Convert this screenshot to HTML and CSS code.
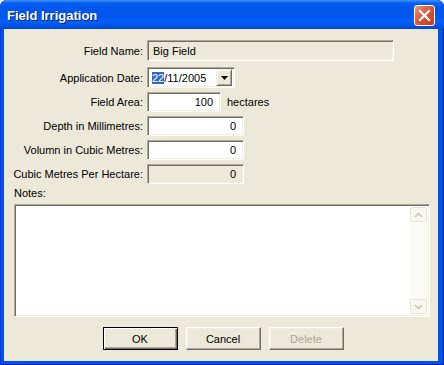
FILE: index.html
```html
<!DOCTYPE html>
<html lang="en">
<head>
  <meta charset="UTF-8">
  <title>Field Irrigation</title>
  <link rel="stylesheet" href="styles.css">
</head>
<body>
  <div class="window">
    <div class="titlebar">
      <span class="title">Field Irrigation</span>
      <span class="close">
        <svg width="13" height="13" viewBox="0 0 13 13"><path d="M2 2 L11 11 M11 2 L2 11" stroke="#fff" stroke-width="2.2" stroke-linecap="square"/></svg>
      </span>
    </div>

    <div class="client">
      <div class="form">
        <div class="row tall">
          <label>Field Name:</label>
          <div class="field readonly wide">Big Field</div>
        </div>
        <div class="row tall">
          <label>Application Date:</label>
          <div class="field combo">
            <span class="date"><span class="sel">22</span>/11/2005</span>
            <span class="drop">
              <svg width="7" height="4" viewBox="0 0 7 4"><path d="M0 0 H7 L3.5 4 Z" fill="#000"/></svg>
            </span>
          </div>
        </div>
        <div class="row">
          <label>Field Area:</label>
          <div class="field num short">100</div>
          <span class="unit">hectares</span>
        </div>
        <div class="row">
          <label>Depth in Millimetres:</label>
          <div class="field num">0</div>
        </div>
        <div class="row">
          <label>Volumn in Cubic Metres:</label>
          <div class="field num">0</div>
        </div>
        <div class="row">
          <label>Cubic Metres Per Hectare:</label>
          <div class="field num readonly">0</div>
        </div>
      </div>

      <div class="notes-label">Notes:</div>
      <div class="field notes">
        <div class="notes-text"></div>
        <div class="scrollbar">
          <span class="arrow">
            <svg width="9" height="6" viewBox="0 0 9 6"><path d="M1 5 L4.5 1.5 L8 5" fill="none" stroke="#c9c7ba" stroke-width="1.6"/></svg>
          </span>
          <span class="track"></span>
          <span class="arrow">
            <svg width="9" height="6" viewBox="0 0 9 6"><path d="M1 1 L4.5 4.5 L8 1" fill="none" stroke="#c9c7ba" stroke-width="1.6"/></svg>
          </span>
        </div>
      </div>

      <div class="buttons">
        <button class="btn default">OK</button>
        <button class="btn">Cancel</button>
        <button class="btn" disabled>Delete</button>
      </div>
    </div>
  </div>
</body>
</html>
```

FILE: styles.css
```css
body {
  margin: 0;
  font-family: "Liberation Sans", Arial, sans-serif;
  font-size: 11px;
  color: #000;
  background: #fff;
}
.window {
  width: 444px;
  height: 365px;
  display: flex;
  flex-direction: column;
  background: #0053e6;
  border-radius: 7px 7px 0 0;
  box-shadow: inset 1px 0 0 #0831d9, inset -1px 0 0 #001ea0, inset 0 -1px 0 #001ea0;
}
.titlebar {
  height: 29px;
  display: flex;
  align-items: center;
  justify-content: space-between;
  padding: 0 9px 0 7px;
  box-sizing: border-box;
  border-radius: 7px 7px 0 0;
  background: linear-gradient(#3d95ff 0, #0a5fef 3px, #0058ee 8px, #0055ea 14px, #0060f8 22px, #0050e0 27px, #0046d0 29px);
}
.title {
  color: #fff;
  font-weight: bold;
  font-size: 13px;
  text-shadow: 1px 1px 0 #0a1e80;
  margin-top: 1px;
}
.close {
  width: 21px;
  height: 21px;
  box-sizing: border-box;
  border: 1px solid #fff;
  border-radius: 3px;
  background: linear-gradient(135deg, #e9a08a 0, #e06a4e 30%, #d24a2f 65%, #c13a22 100%);
  display: flex;
  align-items: center;
  justify-content: center;
  margin-top: 2px;
}
.client {
  flex: 1;
  margin: 0 6px 4px 4px;
  background: #ece9d8;
  padding: 11px 8px 0 10px;
  display: flex;
  flex-direction: column;
}
.form {
  display: flex;
  flex-direction: column;
}
.row {
  display: flex;
  align-items: center;
  height: 20px;
  margin-top: 4px;
}
.row.tall {
  height: 21px;
  margin-top: 6px;
}
.row:first-child {
  margin-top: 0;
}
.row label {
  flex: none;
  width: 129px;
  margin-right: 4px;
  display: flex;
  justify-content: flex-end;
  white-space: nowrap;
}
.field {
  box-sizing: border-box;
  height: 100%;
  width: 97px;
  background: #fff;
  border: 1px solid;
  border-color: #aca899 #fff #fff #aca899;
  box-shadow: inset 1px 1px 0 #716f64, inset -1px -1px 0 #f1efe2;
  display: flex;
  align-items: center;
  padding: 0 5px;
  white-space: nowrap;
}
.field.readonly {
  background: #ece9d8;
}
.field.wide {
  width: 247px;
}
.field.num {
  justify-content: flex-end;
  padding-right: 7px;
}
.field.short {
  width: 74px;
}
.unit {
  margin-left: 6px;
}
.combo {
  width: 88px;
  padding: 2px 2px 2px 4px;
}
.date {
  flex: 1;
}
.sel {
  background: #316ac5;
  color: #fff;
}
.drop {
  width: 16px;
  height: 17px;
  box-sizing: border-box;
  background: #ece9d8;
  border: 1px solid;
  border-color: #f1efe2 #716f64 #716f64 #f1efe2;
  box-shadow: inset 1px 1px 0 #fff, inset -1px -1px 0 #aca899;
  display: flex;
  align-items: center;
  justify-content: center;
}
.notes-label {
  margin-top: 3px;
  line-height: 13px;
}
.notes {
  margin-top: 4px;
  width: 416px;
  height: 113px;
  padding: 2px;
  align-items: stretch;
}
.notes-text {
  flex: 1;
}
.scrollbar {
  width: 17px;
  display: flex;
  flex-direction: column;
  background: #fbfbf8;
}
.arrow {
  height: 15px;
  box-sizing: border-box;
  border: 1px solid #e8e6dc;
  border-radius: 2px;
  background: #f7f6f1;
  display: flex;
  align-items: center;
  justify-content: center;
}
.track {
  flex: 1;
}
.buttons {
  display: flex;
  justify-content: center;
  gap: 8px;
  margin-top: 10px;
  padding-left: 2px;
}
.btn {
  width: 75px;
  height: 23px;
  font-family: "Liberation Sans", Arial, sans-serif;
  font-size: 11px;
  color: #000;
  background: #ece9d8;
  border: 1px solid;
  border-color: #fff #716f64 #716f64 #fff;
  box-shadow: inset -1px -1px 0 #aca899, inset 1px 1px 0 #f1efe2;
  padding: 0;
}
.btn.default {
  border-color: #000;
  box-shadow: inset 1px 1px 0 #fff, inset -1px -1px 0 #716f64, inset -2px -2px 0 #aca899;
}
.btn:disabled {
  color: #aca899;
}
```
